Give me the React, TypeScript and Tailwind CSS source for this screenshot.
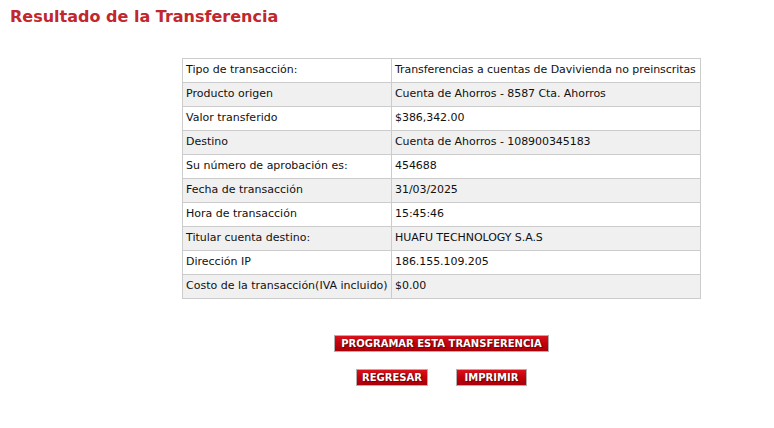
import React from "react";

const rows: [string, string][] = [
  ["Tipo de transacción:", "Transferencias a cuentas de Davivienda no preinscritas"],
  ["Producto origen", "Cuenta de Ahorros - 8587 Cta. Ahorros"],
  ["Valor transferido", "$386,342.00"],
  ["Destino", "Cuenta de Ahorros - 108900345183"],
  ["Su número de aprobación es:", "454688"],
  ["Fecha de transacción", "31/03/2025"],
  ["Hora de transacción", "15:45:46"],
  ["Titular cuenta destino:", "HUAFU TECHNOLOGY S.A.S"],
  ["Dirección IP", "186.155.109.205"],
  ["Costo de la transacción(IVA incluido)", "$0.00"],
];

function Btn({ label, w }: { label: string; w: string }) {
  return (
    <div
      className={`${w} h-[17px] flex items-center justify-center whitespace-nowrap border border-[#b0b0b0] bg-gradient-to-b from-[#d8121b] via-[#c4000a] to-[#a8000a] text-white font-bold text-[10px] leading-none`}
      style={{ textShadow: "0 0 1px #600, 1px 1px 0 #700" }}
    >
      {label}
    </div>
  );
}

export default function App() {
  return (
    <div className="w-[774px] h-[428px] bg-white" style={{ fontFamily: '"DejaVu Sans", Verdana, sans-serif' }}>
      <h1 className="pl-[10px] pt-[6px] text-[16px] font-bold text-[#c1272d] leading-[22px]">
        Resultado de la Transferencia
      </h1>
      <div className="ml-[182px] mt-[30px] w-[519px]">
        <table className="w-[519px] table-fixed border-collapse text-[11px] text-[#111]">
          <tbody>
            {rows.map(([k, v], i) => (
              <tr key={k} className={i % 2 === 1 ? "bg-[#f0f0f0]" : "bg-white"}>
                <td className="w-[209px] h-[24px] border border-[#cccccc] px-[3px] whitespace-nowrap">{k}</td>
                <td className="h-[24px] border border-[#cccccc] px-[3px] whitespace-nowrap tracking-[-0.06px]">{v}</td>
              </tr>
            ))}
          </tbody>
        </table>
        <div className="flex justify-center mt-[36px]">
          <Btn label="PROGRAMAR ESTA TRANSFERENCIA" w="w-[215px]" />
        </div>
        <div className="flex justify-center gap-[28px] mt-[17px]">
          <Btn label="REGRESAR" w="w-[72px]" />
          <Btn label="IMPRIMIR" w="w-[71px]" />
        </div>
      </div>
    </div>
  );
}
